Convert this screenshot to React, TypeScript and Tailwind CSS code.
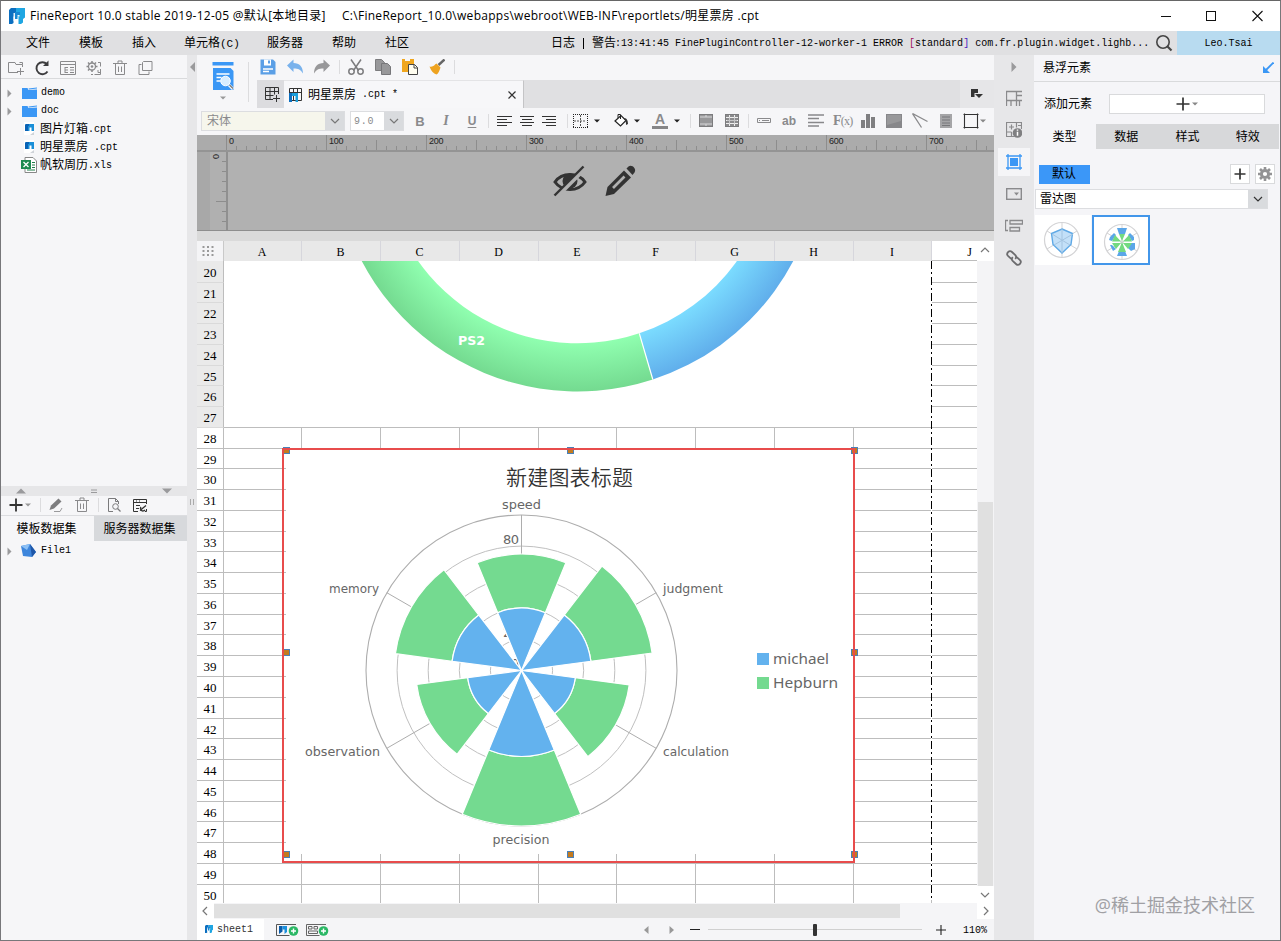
import type { ReactNode } from 'react';

const SONG = "font-['Liberation_Mono','Noto_Sans_CJK_SC',monospace] text-[10px]";
const CJK = "font-['Open_Sans','Noto_Sans_CJK_SC',sans-serif] text-[12px]";

function Icon({ w = 16, h = 16, className = '', children }: { w?: number; h?: number; className?: string; children: ReactNode }) {
  return (
    <svg width={w} height={h} viewBox={`0 0 ${w} ${h}`} fill="none" className={`shrink-0 ${className}`}>
      {children}
    </svg>
  );
}

function Caret({ className = '', color = '#222' }: { className?: string; color?: string }) {
  return (
    <Icon w={6} h={4} className={className}>
      <path d="M0 0.5h6L3 3.5z" fill={color} />
    </Icon>
  );
}

function Chevron({ color = '#777' }: { color?: string }) {
  return (
    <Icon w={10} h={6}>
      <path d="M1 1l4 4 4-4" stroke={color} strokeWidth="1.2" />
    </Icon>
  );
}

function Sep({ className = '' }: { className?: string }) {
  return <div className={`w-px shrink-0 bg-[#dcdcde] ${className}`} />;
}

function Logo({ s = 16 }: { s?: number }) {
  return (
    <svg width={s} height={s} viewBox="0 0 16 16" className="shrink-0">
      <path d="M2 0h14v9.500l-2 1.500v3.500l-2 1.500H9.500V8.500H7V0z" fill="#1fa6e2" />
      <path d="M0 2l2-2h5v8.500H4.500V15l-1.500 1H0z" fill="#0c6fc0" />
      <path d="M4.500 5h6v3.500H7.500V12l-1 1h-2z" fill="#fff" opacity="0.9" />
      <path d="M6 4h5v3H8.500v4H6z" fill="#1788d4" />
    </svg>
  );
}

function TitleBar() {
  return (
    <div className="flex h-[31px] shrink-0 items-center bg-white pl-2 pt-px text-black">
      <Logo s={16} />
      <div className="ml-[5px] w-[312px] whitespace-pre font-['Open_Sans','Noto_Sans_CJK_SC',sans-serif] text-[12px] tracking-[0.26px]">
        FineReport 10.0 stable 2019-12-05 @默认[本地目录]
      </div>
      <div className="flex-1 whitespace-pre font-['Open_Sans','Noto_Sans_CJK_SC',sans-serif] text-[12px] tracking-[0.28px]">
        C:\FineReport_10.0\webapps\webroot\WEB-INF\reportlets/明星票房 .cpt
      </div>
      <Icon w={10} h={12} className="mr-[35px]"><path d="M0 6.500h10" stroke="#111" /></Icon>
      <Icon w={11} h={12} className="mr-[35px]"><rect x="0.500" y="1.500" width="9" height="9" stroke="#111" /></Icon>
      <Icon w={11} h={12} className="mr-[17px]"><path d="M0.500 1l10 10M10.500 1l-10 10" stroke="#111" strokeWidth="1.100" /></Icon>
    </div>
  );
}

function MenuBar() {
  return (
    <div className={`flex h-6 shrink-0 items-center bg-[#e0e0e2] text-black ${CJK}`}>
      <span className="ml-[25px] w-[53px]">文件</span>
      <span className="w-[53px]">模板</span>
      <span className="w-[52px]">插入</span>
      <span className="w-[83px]">单元格<span className="font-['Liberation_Mono',monospace] text-[11px]">(C)</span></span>
      <span className="w-[65px]">服务器</span>
      <span className="w-[53px]">帮助</span>
      <span className="w-[166px]">社区</span>
      <span>日志</span>
      <span className="mx-[8px] h-[11px] w-px bg-black" />
      <span>警告</span>
      <span className={`-ml-px flex-1 whitespace-pre ${SONG}`}>
        :13:41:45 FinePluginController-12-worker-1 ERROR <span className="text-[#a01060]">[</span>standard<span className="text-[#4a20c0]">]</span> com.fr.plugin.widget.lighb...
      </span>
      <Icon w={18} h={18} className="mr-1">
        <circle cx="8" cy="8" r="6.200" stroke="#444" strokeWidth="1.600" />
        <path d="M12.500 12.500l4 4" stroke="#444" strokeWidth="2.200" />
      </Icon>
      <div className={`flex h-6 w-[103px] items-center justify-center bg-[#b8dbf0] ${SONG}`}>Leo.Tsai</div>
    </div>
  );
}

function Folder() {
  return (
    <Icon w={15} h={13}>
      <path d="M0 1h5.500l1 2L15 2.500V12H0z" fill="#3b97f5" />
      <path d="M6.500 1.500L15 0.500v1l-8 1z" fill="#3b97f5" />
    </Icon>
  );
}

function CptFile() {
  return (
    <Icon w={15} h={14}>
      <rect x="2" y="0" width="10" height="13" fill="#fff" />
      <path d="M4 2h8v7H9.500V5.500h-2V9H3V3z" fill="#1a8fd8" />
      <path d="M3 3l1-1h3v2H6v5H3z" fill="#0a62b5" />
      <path d="M8 13l4-3v3z" fill="#cfd3d8" />
    </Icon>
  );
}

function XlsFile() {
  return (
    <Icon w={16} h={16}>
      <path d="M4 0.500h8l3.500 3.500v11.500H4z" fill="#fff" stroke="#888" />
      <path d="M11 5.500h3M11 8h3M11 10.500h3M6 13h8" stroke="#1e7d49" />
      <rect x="0" y="3" width="10" height="9" fill="#1e8a50" />
      <path d="M2.500 5l5 5M7.500 5l-5 5" stroke="#fff" strokeWidth="1.300" />
    </Icon>
  );
}

function TreeRow({ arrow, icon, name, ext }: { arrow?: boolean; icon: ReactNode; name?: string; ext?: string }) {
  return (
    <div className="flex h-[18px] items-center whitespace-pre pl-[6px] text-black">
      <Icon w={5} h={9} className={arrow ? '' : 'invisible'}><path d="M0.500 0.500v8l4-4z" fill="#9a9a9c" /></Icon>
      <span className="ml-[9px] mr-[3px] flex w-4 justify-center">{icon}</span>
      {name && <span className={CJK}>{name}</span>}
      <span className={name ? SONG : `ml-px -mt-px ${SONG}`}>{ext}</span>
    </div>
  );
}

function LeftPanel() {
  return (
    <div className="flex w-[186px] shrink-0 flex-col bg-[#f6f6f8]">
      <div className="flex h-[24px] shrink-0 items-center gap-[10px] border-b border-[#d9dadc] pl-[7px] pt-[2px]">
        <Icon>
          <path d="M14.500 7V4.500H8L7 2.500H0.500v10H10M11.500 2.500h3v2M12.500 8v7M9 11.500h7" stroke="#8a8a8c" />
        </Icon>
        <Icon>
          <path d="M13.500 11.500A6 6 0 1 1 12.800 4" stroke="#3c3c3e" strokeWidth="1.900" />
          <path d="M14.500 0.500v5.500H9z" fill="#3c3c3e" />
        </Icon>
        <Icon>
          <path d="M0.500 1.500h15v13H0.500zM0.500 4.500h15M5 7v6M5 7.500h3M5 10h3M5 12.500h3M10 7.500h4M10 10h4M10 12.500h4" stroke="#8a8a8c" />
        </Icon>
        <Icon>
          <circle cx="6" cy="6.500" r="3.500" stroke="#8a8a8c" strokeWidth="1.300" />
          <circle cx="6" cy="6.500" r="1.300" fill="#8a8a8c" />
          <path d="M6 1v2M6 10v2M0.500 6.500h2M9.500 6.500h2M2 2.500l1.500 1.500M10 2.500L8.500 4M2 10.500L3.500 9" stroke="#8a8a8c" strokeWidth="1.500" />
          <path d="M12 2.500h2.500v4M14.500 9v5.500h-6M5 14.500h2M12 10v2.500h2" stroke="#8a8a8c" />
        </Icon>
        <Icon>
          <path d="M1 3.500h14M6 3V1h4v2M3.500 4v10.500h9V4M6.500 6.500v5.500M9.500 6.500v5.500" stroke="#8a8a8c" />
        </Icon>
        <Icon>
          <path d="M5.500 1.500h8.500v9H4.500v-8zM3.500 4.500h-2.500v10h10v-3" stroke="#8a8a8c" />
        </Icon>
      </div>
      <div className="flex-1 pt-[5px]">
        <TreeRow arrow icon={<Folder />} ext="demo" />
        <TreeRow arrow icon={<Folder />} ext="doc" />
        <TreeRow icon={<CptFile />} name="图片灯箱" ext=".cpt" />
        <TreeRow icon={<CptFile />} name="明星票房" ext=" .cpt" />
        <TreeRow icon={<XlsFile />} name="帆软周历" ext=".xls" />
      </div>
      <div className="flex h-[10px] shrink-0 items-center bg-[#e6e6e8] pl-[15px]">
        <Icon w={10} h={6}><path d="M0 5.500h10L5 0.500z" fill="#9a9a9c" /></Icon>
        <Icon w={6} h={5} className="ml-[65px]"><path d="M0 1h6M0 3.500h6" stroke="#9a9a9c" /></Icon>
        <Icon w={10} h={6} className="ml-[65px]"><path d="M0 0.500h10L5 5.500z" fill="#9a9a9c" /></Icon>
      </div>
      <div className="flex h-[20px] shrink-0 items-center border-b border-[#dcdde0] pb-px pl-2">
        <Icon w={14} h={14}><path d="M7 0.500v13M0.500 7h13" stroke="#333" strokeWidth="1.800" /></Icon>
        <Caret color="#999" className="ml-[2px]" />
        <Sep className="ml-[9px] h-[14px]" />
        <Icon className="ml-[7px]">
          <path d="M1.500 13l1.500-4.500 7.500-7 3 3-7.500 7z" fill="#7d7d7f" />
          <path d="M6 14.500h6l2-3.500" stroke="#9a9a9c" />
        </Icon>
        <Icon className="ml-[10px]">
          <path d="M1 3.500h14M6 3V1h4v2M3.500 4v10.500h9V4M6.500 6.500v5.500M9.500 6.500v5.500" stroke="#8a8a8c" />
        </Icon>
        <Sep className="ml-[8px] h-[14px]" />
        <Icon className="ml-[7px]">
          <path d="M7 14.500H2.500v-13h7l3 3V7M9.500 1.500v3h3" stroke="#7a7a7c" />
          <circle cx="9.500" cy="9.500" r="2.800" stroke="#7a7a7c" />
          <path d="M11.500 11.500l3 3" stroke="#7a7a7c" strokeWidth="1.300" />
        </Icon>
        <Icon className="ml-[10px]">
          <path d="M6 14.500H1.500v-12h13V7M1.500 5.500h13M4 8.500h4M4 11.500h3M4 4h1M7 4h1M13 14.500h1.500V12" stroke="#333" />
          <path d="M8 13.500l6-5M9 10a2.500 2.500 0 1 0 4 3" stroke="#333" strokeWidth="1.300" />
        </Icon>
      </div>
      <div className={`flex h-[25px] shrink-0 text-black ${CJK}`}>
        <div className="flex w-[93px] items-center justify-center pr-[2px]">模板数据集</div>
        <div className="flex w-[93px] items-center justify-center bg-[#d7d9dc] pr-[2px]">服务器数据集</div>
      </div>
      <div className="h-[399px] shrink-0 pt-px">
        <TreeRow
          arrow
          ext="File1"
          icon={
            <Icon w={16} h={14}>
              <path d="M0 2l9-2 6 8-4 5-9-1z" fill="#3e86dc" />
              <path d="M9 0l6 8-4 5z" fill="#1f57a8" />
              <path d="M0 2l9-2-3 6z" fill="#8cc0f5" />
            </Icon>
          }
        />
      </div>
    </div>
  );
}

function SplitBar() {
  return (
    <div className="flex w-[10px] shrink-0 flex-col items-center bg-[#e7e7e9] pt-[7px]">
      <Icon w={5} h={10}><path d="M5 0v10L0 5z" fill="#9a9a9c" /></Icon>
      <Icon w={4} h={6} className="mt-[427px]"><path d="M0.500 0v6M3.500 0v6" stroke="#aaa" /></Icon>
    </div>
  );
}

function MainToolbar() {
  return (
    <div className="flex h-[53px] shrink-0 bg-[#f6f6f8]">
      <div className="flex w-[51px] flex-col items-center pt-[7px]">
        <Icon w={22} h={29}>
          <path d="M0.500 0h21v3.500h-21z" fill="#3b97f5" />
          <path d="M1 6h17.500l3 3v19H1z" fill="#3b97f5" />
          <path d="M4.500 12h13M4.500 15.500h5M4.500 19h4" stroke="#fff" strokeWidth="1.500" />
          <circle cx="13.500" cy="19" r="4.800" fill="#d9edff" stroke="#fff" />
          <path d="M17 23l4 4" stroke="#fff" strokeWidth="3" />
          <path d="M17.500 23l3.500 3.500" stroke="#777" strokeWidth="1.300" />
        </Icon>
        <Caret color="#999" className="mt-[5px]" />
      </div>
      <Sep className="mt-[7px] h-[40px]" />
      <div className="ml-[8px] flex flex-1 flex-col">
        <div className="flex h-[25px] items-center pb-px pl-[3px]">
          <Icon>
            <path d="M0.500 0.500h12.500l2.500 2.500v12.500H0.500z" fill="#5b9fe6" />
            <path d="M4 0.500h7v6H4z" fill="#fff" />
            <path d="M8 1.500h2v3H8z" fill="#5b9fe6" />
            <path d="M3 10h10M3 12.500h6" stroke="#fff" strokeWidth="1.400" />
          </Icon>
          <Icon className="ml-[11px]"><path d="M0 6.500L6.500 0.500v3.500c6 0 9.500 4 9.500 10.500-2.500-4-4.500-5-9.500-5V13z" fill="#79b2ec" /></Icon>
          <Icon className="ml-[11px]"><path d="M16 6.500L9.500 0.500v3.500c-6 0-9.500 4-9.500 10.500 2.500-4 4.500-5 9.500-5V13z" fill="#98989a" /></Icon>
          <Sep className="ml-[9px] h-[14px]" />
          <Icon className="ml-[8px]">
            <path d="M3 0.500l7.500 11M13 0.500L5.500 11.500" stroke="#7c7c7e" strokeWidth="1.500" />
            <circle cx="3.500" cy="12.500" r="2.700" stroke="#7c7c7e" strokeWidth="1.500" />
            <circle cx="12.500" cy="12.500" r="2.700" stroke="#7c7c7e" strokeWidth="1.500" />
          </Icon>
          <Icon className="ml-[11px]">
            <path d="M0.500 0.500h6l3 3v8h-9z" fill="#98989a" stroke="#7c7c7e" />
            <path d="M6.500 4.500h6l3 3v8h-9z" fill="#98989a" stroke="#77777a" />
          </Icon>
          <Icon className="ml-[11px]">
            <path d="M0 0h3v2h5V0h4v13H0z" fill="#f0a61e" />
            <path d="M6.500 5.500h6l3 3v7h-9z" fill="#fffdf0" stroke="#444" />
            <path d="M12 5.500v3.500h3.500" stroke="#444" />
          </Icon>
          <Icon className="ml-[11px]">
            <path d="M15.500 0.500L9.500 6" stroke="#666" strokeWidth="2.400" />
            <path d="M0.500 7.500c4 1 5-2 7-3l4 4c-1 3-2 6-4 7-3-1-5-3-7-8z" fill="#eea320" />
          </Icon>
          <Sep className="ml-[9px] h-[14px]" />
        </div>
        <div className="flex h-[28px] bg-[#e0e0e2]">
          <div className="flex w-[27px] items-center justify-end bg-[#dcdcdf] pr-[4px]">
            <Icon w={15} h={15}>
              <path d="M8 12.500H0.500v-12h13V7M0.500 4.500h13M0.500 8.500h8M5 0.500v12M9.500 0.500v7M11.500 8v7M8 11.500h7" stroke="#333" />
            </Icon>
          </div>
          <div className="flex w-[240px] items-center border-t border-r border-[#c4c4c6] border-t-[#e4e4e6] bg-[#f7f7f9] pl-[5px] text-black">
            <Icon w={14} h={14}>
              <path d="M0.500 0.500h12v12h-12zM0.500 4.500h12M4.500 0.500v12M8.500 0.500v12" stroke="#333" />
              <path d="M0 5h3v9H0z" fill="#0c6fc0" />
              <path d="M3 5h6v9H6.500V8H3z" fill="#1b9fdc" />
            </Icon>
            <span className={`ml-[5px] ${CJK}`}>明星票房</span>
            <span className={`flex-1 whitespace-pre ${SONG}`}> .cpt *</span>
            <Icon w={8} h={8} className="mr-[7px]"><path d="M0.500 0.500l7 7M7.500 0.500l-7 7" stroke="#333" strokeWidth="1.200" /></Icon>
          </div>
          <div className="flex-1" />
          <div className="flex w-[34px] items-center justify-center bg-[#e6e6e8]">
            <Icon w={12} h={10}>
              <path d="M0 0h7v4H3.500v4H0z" fill="#333" />
              <path d="M4 5h8L8 9z" fill="#333" />
            </Icon>
          </div>
        </div>
      </div>
    </div>
  );
}

function FormatBar() {
  return (
    <div className="flex h-[27px] shrink-0 items-center bg-[#f6f6f8] pb-px pl-1 text-[#8a8a8c]">
      <div className="flex h-5 w-[144px] border border-[#dcdde0] bg-[#f6f6ec]">
        <div className={`flex flex-1 items-center pl-[5px] ${CJK}`}>宋体</div>
        <div className="flex w-[19px] items-center justify-center bg-[#d9dbde]"><Chevron /></div>
      </div>
      <div className="ml-[5px] flex h-5 w-[54px] border border-[#dcdde0] bg-white">
        <div className={`flex flex-1 items-center whitespace-pre pl-[3px] tracking-[0.8px] ${SONG}`}>9.0</div>
        <div className="flex w-[19px] items-center justify-center bg-[#d9dbde]"><Chevron /></div>
      </div>
      <span className="ml-[10px] w-3 text-center font-['Liberation_Sans',sans-serif] text-[13px] font-bold leading-none">B</span>
      <span className="ml-[14px] w-3 text-center font-['Liberation_Serif',serif] text-[14px] font-bold italic leading-none">I</span>
      <span className="ml-[14px] w-3 text-center font-['Liberation_Sans',sans-serif] text-[12px] font-bold leading-none underline underline-offset-2">U</span>
      <Sep className="ml-[10px] h-[14px]" />
      <Icon className="ml-[7px]"><path d="M1 3.500h15M1 6.500h10M1 9.500h15M1 12.500h10" stroke="#333" /></Icon>
      <Icon className="ml-[7px]"><path d="M1 3.500h14M3 6.500h10M1 9.500h14M3 12.500h10" stroke="#333" /></Icon>
      <Icon className="ml-[6px]"><path d="M1 3.500h14M5 6.500h10M1 9.500h14M5 12.500h10" stroke="#333" /></Icon>
      <Sep className="ml-[10px] h-[14px]" />
      <Icon className="ml-1">
        <path d="M1 1.500h15M1 14.500h15M1.500 1v14M15.500 1v14" stroke="#222" strokeDasharray="1 1" />
        <path d="M2 8h12M8.500 2v12" stroke="#555" strokeDasharray="2 1" />
      </Icon>
      <Caret className="ml-[6px]" />
      <Icon className="ml-[13px]">
        <path d="M2 8l6-5.500 5 5-5.500 5.500z" stroke="#222" strokeWidth="1.200" fill="#fff" />
        <path d="M5 5V1.500h2.500V6" stroke="#222" />
        <path d="M11 5c3 0 4 3 4 6l-2 1c0-2 0-4-2-7z" fill="#333" />
      </Icon>
      <Caret className="ml-[5px]" />
      <div className="ml-[12px] flex w-4 flex-col items-center font-['Liberation_Sans',sans-serif] text-[14px] font-bold leading-[12px]">
        A
        <span className="mt-px h-[3px] w-4 bg-[#858587]" />
      </div>
      <Caret className="ml-[6px]" />
      <Sep className="ml-[10px] h-[14px]" />
      <Icon className="ml-[7px]">
        <rect x="1.500" y="1.500" width="13" height="12" fill="#98989a" stroke="#7c7c7e" />
        <path d="M2 4h12M2 11h12M8 2v2M8 11v2" stroke="#d8d8da" />
      </Icon>
      <Icon className="ml-[10px]">
        <rect x="1.500" y="1.500" width="13" height="12" fill="#8b8b8d" stroke="#7c7c7e" />
        <path d="M2 4.500h12M2 10.500h12M5.500 2v2.500M5.500 10.500V13M10.500 2v2.500M10.500 10.500V13M2 7.500h1M13 7.500h1" stroke="#eee" />
        <path d="M5.500 4.500v6M10.500 4.500v6M3 7.500h10" stroke="#c4c4c6" />
      </Icon>
      <Sep className="ml-[8px] h-[14px]" />
      <Icon className="ml-[7px]"><path d="M1.500 5.500h13v4h-13zM3 7.500h1M6 7.500h7" stroke="#8a8a8c" /></Icon>
      <span className="ml-[9px] w-4 text-center font-['Liberation_Sans',sans-serif] text-[12px] font-bold leading-none">ab</span>
      <Icon className="ml-[11px]"><path d="M0 2h16M0 5.500h11M0 9.500h16M0 13h11" stroke="#88888a" strokeWidth="1.600" /></Icon>
      <span className="ml-[9px] w-[18px] whitespace-nowrap font-['Liberation_Serif',serif] text-[14px] font-bold leading-none tracking-[-0.8px]">F<span className="text-[12px] font-normal">(x)</span></span>
      <Icon className="ml-[9px]"><path d="M1 7h4v8H1zM6 1h4v14H6zM11 4h4v11h-4z" fill="#7f7f81" /></Icon>
      <Icon className="ml-[10px]">
        <rect x="0.500" y="1.500" width="15" height="13" fill="#98989a" stroke="#87878a" />
        <path d="M1 12l14-4v6H1z" fill="#87878a" />
      </Icon>
      <Icon className="ml-[10px]"><path d="M0.500 0.500l15 8M0.500 0.500l9 14" stroke="#8a8a8c" strokeWidth="1.300" /></Icon>
      <Icon className="ml-[10px]">
        <rect x="2" y="1" width="12" height="14" fill="#a5a5a7" />
        <path d="M4 4h8M4 7h8M4 10h8M4 12.500h8" stroke="#77777a" />
      </Icon>
      <Icon className="ml-[9px]"><path d="M0.500 1.500h15M0.500 14.500h15M1.500 0.500v15M14.500 0.500v15" stroke="#333" strokeWidth="1.100" /></Icon>
      <Caret className="ml-px" color="#888" />
    </div>
  );
}

function Ruler() {
  return (
    <div className="flex h-[96px] shrink-0 flex-col overflow-hidden border-b border-[#8e8e8e] bg-[#b1b1b1]">
      <div className="flex h-[17px] shrink-0 border-b-2 border-[#949494] bg-[#ababab]">
        <div className="w-[29px] shrink-0" />
        {Array.from({ length: 77 }, (_, i) => (
          <div key={i} className="flex w-[10px] shrink-0 items-end">
            <span className={`w-px shrink-0 bg-[#8d8d8d] ${i % 10 === 0 ? 'h-[15px]' : i % 5 === 0 ? 'h-[10px]' : 'h-[4px]'}`} />
            {i % 10 === 0 && (
              <span className="relative -top-[3px] ml-[2px] w-0 font-['Liberation_Sans',sans-serif] text-[9px] leading-[11px] tracking-[-0.2px] text-[#222]">{i * 10}</span>
            )}
          </div>
        ))}
      </div>
      <div className="flex flex-1">
        <div className="w-[13px] bg-[#a8a8a8]" />
        <div className="flex w-[18px] flex-col items-end border-r-2 border-[#909090] bg-[#b0b0b0]">
          <span className="mr-[7px] h-[9px] -rotate-90 font-['Liberation_Sans',sans-serif] text-[9px] leading-[9px] text-[#222]">0</span>
          {[4, 4, 4, 4, 10, 4, 4].map((w, i) => (
            <span key={i} className={`mb-[9px] h-px shrink-0 bg-[#8d8d8d] ${w === 10 ? 'w-[10px]' : 'w-1'}`} />
          ))}
        </div>
        <div className="flex flex-1 items-start gap-[17px] pl-[324px] pt-[12px]">
          <Icon w={36} h={34}>
            <path d="M3 18C10 8 26 8 33 18 26 28 10 28 3 18z" stroke="#333" strokeWidth="3" />
            <circle cx="18" cy="17" r="7.500" fill="#333" />
            <path d="M5 32L34 3" stroke="#b1b1b1" strokeWidth="5" />
            <path d="M2.500 31.500L31.500 2.500" stroke="#333" strokeWidth="2.400" />
          </Icon>
          <Icon w={34} h={34}>
            <path d="M0.500 32l2-9L19 6.500l7 7L9 30z" fill="#333" />
            <path d="M8 24L19.500 12.500" stroke="#b1b1b1" strokeWidth="2.600" />
            <path d="M21.500 4.500l2-2c3-2.500 8.500 2 6 6l-2 2.500z" fill="#333" />
          </Icon>
        </div>
      </div>
    </div>
  );
}

const COLS = [
  { name: 'A', w: 'w-[78px]' },
  { name: 'B', w: 'w-[79px]' },
  { name: 'C', w: 'w-[79px]' },
  { name: 'D', w: 'w-[79px]' },
  { name: 'E', w: 'w-[78px]' },
  { name: 'F', w: 'w-[79px]' },
  { name: 'G', w: 'w-[79px]' },
  { name: 'H', w: 'w-[79px]' },
  { name: 'I', w: 'w-[78px]' },
];

function ColumnHeader() {
  return (
    <div className="flex h-[20px] shrink-0 bg-[#e8e8e8] font-['Liberation_Serif',serif] text-[12px] text-black">
      <div className="flex w-[27px] items-center justify-center border-r border-[#c9c9c9] bg-[#f4f4f6]">
        <Icon w={12} h={10} className="mr-[5px]"><path d="M1.500 0v10M6 0v10M10.500 0v10" stroke="#999" strokeWidth="2" strokeDasharray="2 2" /></Icon>
      </div>
      {COLS.map((c) => (
        <div key={c.name} className={`${c.w} flex items-center justify-center border-r border-[#d6d6dc] pt-[4px] pr-px`}>{c.name}</div>
      ))}
      <div className="flex flex-1 items-center justify-end border-b border-[#bdbdbd] bg-white pr-[5px] pt-[4px]">J</div>
    </div>
  );
}

function RingChart() {
  return (
    <svg width="707" height="166" viewBox="224 261 707 166" className="absolute left-[27px] top-0 bg-white">
      <defs>
        <radialGradient id="ringGreen" gradientUnits="userSpaceOnUse" cx="577.500" cy="147.800" r="243.700">
          <stop offset="0.800" stopColor="#90ffb0" />
          <stop offset="1" stopColor="#74da90" />
        </radialGradient>
        <radialGradient id="ringBlue" gradientUnits="userSpaceOnUse" cx="577.500" cy="147.800" r="243.700">
          <stop offset="0.800" stopColor="#7bdcff" />
          <stop offset="1" stopColor="#60aeeb" />
        </radialGradient>
      </defs>
      <path d="M333.800 147.800A243.700 243.700 0 0 0 652.800 379.500L639.300 333.300A195.500 195.500 0 0 1 382 147.800z" fill="url(#ringGreen)" />
      <path d="M821.200 147.800A243.700 243.700 0 0 1 652.800 379.500L639.300 333.300A195.500 195.500 0 0 0 773 147.800z" fill="url(#ringBlue)" />
      <path d="M652.800 379.500L639.300 333.300" stroke="#fff" strokeWidth="1.200" />
      <text x="458" y="345" textLength="27" lengthAdjust="spacingAndGlyphs" fill="#fff" fontSize="12" fontWeight="bold" fontFamily="DejaVu Sans, sans-serif">PS2</text>
    </svg>
  );
}

const CX = 521.5;
const CY = 670.5;

function wedge(angle: number, r0: number, r1: number) {
  const at = (r: number, a: number) => {
    const t = (a * Math.PI) / 180;
    return `${(CX + r * Math.sin(t)).toFixed(2)} ${(CY - r * Math.cos(t)).toFixed(2)}`;
  };
  const a = angle - 22.4;
  const b = angle + 22.4;
  return `M${at(r0, a)}L${at(r1, a)}A${r1} ${r1} 0 0 1 ${at(r1, b)}L${at(r0, b)}A${r0} ${r0} 0 0 0 ${at(r0, a)}z`;
}

const SKILLS = [
  { angle: 0, michael: 62.5, total: 116.5 },
  { angle: 60, michael: 70, total: 131.8 },
  { angle: 120, michael: 54.3, total: 108.7 },
  { angle: 180, michael: 86, total: 155.5 },
  { angle: 240, michael: 54.3, total: 105.7 },
  { angle: 300, michael: 70, total: 127.2 },
];

const LABELS = [
  { text: 'speed', x: 502, y: 509, w: 39 },
  { text: 'judgment', x: 663, y: 593, w: 60 },
  { text: 'calculation', x: 663, y: 756, w: 66 },
  { text: 'precision', x: 492.5, y: 844, w: 57 },
  { text: 'observation', x: 305, y: 756, w: 75 },
  { text: 'memory', x: 329, y: 593, w: 50 },
];

const HANDLES = [
  [286.5, 450.5], [570.5, 450.5], [854.5, 450.5],
  [286.5, 652.5], [854.5, 652.5],
  [286.5, 854.5], [570.5, 854.5], [854.5, 854.5],
];

function RadarChart() {
  return (
    <svg width="578" height="420" viewBox="281 446 578 420" className="absolute left-[84px] top-[185px]">
      <rect x="286" y="450" width="568" height="404" fill="#fff" />
      {[31.1, 62.2, 93.3, 124.4].map((r) => (
        <circle key={r} cx={CX} cy={CY} r={r} fill="none" stroke="#c0c0c0" />
      ))}
      <circle cx={CX} cy={CY} r="155.500" fill="none" stroke="#adadad" strokeWidth="1.100" />
      <path d="M521.500 515v311M386.800 592.700l269.400 155.600M386.800 748.300l269.400-155.600" stroke="#adadad" />
      <g fill="#666" fontSize="13" fontFamily="DejaVu Sans, sans-serif">
        {[80, 20].map((v) => (
          <text key={v} x="503" y={668 - v * 1.555} textLength="16">{v}</text>
        ))}
        <text x="511" y="668">0</text>
      </g>
      {SKILLS.map((s) => (
        <g key={s.angle} stroke="#fff" strokeWidth="1.200">
          <path d={wedge(s.angle, s.michael, s.total)} fill="#74da90" />
          <path d={wedge(s.angle, 0, s.michael)} fill="#63b2ee" />
        </g>
      ))}
      <text x="506" y="485" textLength="127" fill="#333" fontSize="21" fontWeight="350" fontFamily="Noto Sans CJK SC, sans-serif">新建图表标题</text>
      <g fill="#666" fontSize="13" fontFamily="DejaVu Sans, sans-serif">
        {LABELS.map((l) => (
          <text key={l.text} x={l.x} y={l.y} textLength={l.w} lengthAdjust="spacingAndGlyphs">{l.text}</text>
        ))}
      </g>
      <rect x="757" y="653" width="12" height="12" fill="#63b2ee" />
      <rect x="757" y="677" width="12" height="12" fill="#74da90" />
      <g fill="#666" fontSize="15" fontFamily="Noto Sans, sans-serif">
        <text x="773" y="664" textLength="56" lengthAdjust="spacingAndGlyphs">michael</text>
        <text x="773" y="688" textLength="65" lengthAdjust="spacingAndGlyphs">Hepburn</text>
      </g>
      {HANDLES.map(([x, y]) => (
        <rect key={`${x}-${y}`} x={x - 3} y={y - 3} width="6" height="6" fill="#c47a1e" stroke="#4a80b8" />
      ))}
      <rect x="283" y="449" width="571" height="413" fill="none" stroke="#e84c4c" strokeWidth="2" />
    </svg>
  );
}

// rows are 20.76px high at 110% zoom, so every edge is rounded separately
const rowEdge = (i: number) => (i === 0 ? 0 : Math.round(i * 20.76 + 0.8));

function Sheet() {
  const rows = Array.from({ length: 31 }, (_, i) => ({ n: 20 + i, h: rowEdge(i + 1) - rowEdge(i) }));
  return (
    <div className="relative h-[642px] w-[780px] overflow-hidden bg-white">
      {rows.map((r) => (
        <div key={r.n} className="flex" style={{ height: r.h }}>
          <div
            className={`flex w-[27px] items-center justify-center border-r border-b border-r-[#bdbdbd] pt-px font-['Liberation_Serif',serif] text-[13px] leading-none text-black ${
              r.n < 28 ? 'border-b-[#dadada] bg-[#eaeaea]' : 'border-b-[#bdbdbd] bg-white'
            }`}
          >
            {r.n}
          </div>
          {COLS.map((c) => (
            <div key={c.name} className={`${c.w} border-r border-b border-[#bdbdbd]`} />
          ))}
          <div className="flex-1 border-b border-[#bdbdbd]" />
        </div>
      ))}
      <div className="absolute left-[734px] top-0 h-[639px] w-px bg-[repeating-linear-gradient(to_bottom,#000_0_8px,#fff_8px_11px,#000_11px_13px,#fff_13px_16px)]" />
      <RingChart />
      <RadarChart />
    </div>
  );
}

function Editor() {
  return (
    <div className="flex flex-1 flex-col bg-[#dadada] pt-[10px]">
      <div className="flex h-[662px]">
        <div className="flex w-[780px] flex-col">
          <ColumnHeader />
          <Sheet />
        </div>
        <div className="flex flex-1 flex-col items-center bg-[#f4f4f6]">
          <div className="flex h-[20px] w-full items-center justify-center bg-white pr-px pb-[2px]">
            <Icon w={10} h={6}><path d="M1 5l4-4 4 4" stroke="#777" strokeWidth="1.200" /></Icon>
          </div>
          <div className="mt-[241px] w-[15px] flex-1 bg-[#e0e0e0]" />
          <div className="flex h-[17px] w-full items-center justify-center bg-white pr-px"><Chevron /></div>
        </div>
      </div>
      <div className="flex h-[16px] bg-[#f5f5f7]">
        <div className="flex w-[17px] items-center justify-center bg-white pr-px">
          <Icon w={6} h={10}><path d="M5 1L1 5l4 4" stroke="#777" strokeWidth="1.200" /></Icon>
        </div>
        <div className="my-px w-[686px] bg-[#e0e0e0]" />
        <div className="flex-1" />
        <div className="flex w-[17px] items-center justify-center bg-white">
          <Icon w={6} h={10}><path d="M1 1l4 4-4 4" stroke="#777" strokeWidth="1.200" /></Icon>
        </div>
      </div>
      <div className="flex h-[21px] items-center bg-[#f5f5f7] text-black">
        <div className="flex h-full w-[67px] items-center bg-white pb-[2px] pl-2">
          <Logo s={8} />
          <span className={`ml-1 pt-px text-[#333] ${SONG}`}>sheet1</span>
        </div>
        <Icon w={24} h={14} className="ml-[12px]">
          <path d="M20 1.500H0.500v11h13" stroke="#555" />
          <path d="M3 3h3.500v5.500L3 11z" fill="#0a5ba8" />
          <path d="M6.500 3H11v6l-2.500 2V6.500h-2z" fill="#1b8fdc" />
          <circle cx="17.500" cy="8" r="4.800" fill="#2ab764" />
          <path d="M17.500 5.500v5M15 8h5" stroke="#fff" strokeWidth="1.400" />
        </Icon>
        <Icon w={24} h={14} className="ml-[6px]">
          <path d="M20 1.500H0.500v11h13M2.500 3.500h3.500v2.500H2.500zM8 3.500h3.500v2.500H8zM2.500 8h9v2.500h-9z" stroke="#666" />
          <circle cx="17.500" cy="8" r="4.800" fill="#2ab764" />
          <path d="M17.500 5.500v5M15 8h5" stroke="#fff" strokeWidth="1.400" />
        </Icon>
        <Icon w={5} h={8} className="ml-[314px]"><path d="M4.500 0v8L0 4z" fill="#999" /></Icon>
        <Icon w={5} h={8} className="ml-[20px]"><path d="M0.500 0v8L5 4z" fill="#999" /></Icon>
        <span className="ml-[16px] h-px w-[10px] bg-[#222]" />
        <div className="ml-2 flex h-3 w-[214px] items-center">
          <span className="h-px w-[105px] bg-[#d0d0d0]" />
          <span className="h-3 w-1 rounded-[1px] bg-[#333]" />
          <span className="h-px flex-1 bg-[#d0d0d0]" />
        </div>
        <Icon w={10} h={10} className="ml-[14px]"><path d="M5 0v10M0 5h10" stroke="#222" strokeWidth="1.100" /></Icon>
        <span className={`ml-[17px] pt-px ${SONG}`}>110%</span>
      </div>
    </div>
  );
}

function SideStrip() {
  return (
    <div className="flex w-10 shrink-0 flex-col items-center bg-[#e7e7e9]">
      <div className="flex h-[27px] items-center pb-[3px]"><Icon w={6} h={10}><path d="M0.500 0v10l5-5z" fill="#9a9a9c" /></Icon></div>
      <div className="flex h-8 items-center">
        <Icon><path d="M16 1.500H0.500V16M0.500 10.500h10v-9M10.500 5.500H16M10.500 10.500H16M5 11v5M10.500 11v5M13.500 11v5" stroke="#8a8a8c" strokeWidth="1.300" /></Icon>
      </div>
      <div className="flex h-8 items-center">
        <Icon>
          <path d="M8 14.500H0.500v-14h15V7M3 5h5M5.500 2.500v5M10.500 0.500v5M0.500 10h5M5.500 10v4M12 3.500h3" stroke="#8a8a8c" strokeWidth="1.200" />
          <circle cx="11.500" cy="11" r="4.800" fill="#7f7f81" />
          <path d="M11.500 9.800v4M11.500 7.500v1.300" stroke="#fff" strokeWidth="1.500" />
        </Icon>
      </div>
      <div className="flex h-8 items-center">
        <div className="flex h-7 w-8 items-center justify-center bg-[#f5f5f7]">
          <Icon>
            <path d="M0 2h16M0 14h16M2 0v16M14 0v16" stroke="#3b97f5" strokeWidth="1.300" />
            <rect x="4.500" y="4.500" width="7" height="7" fill="#3b97f5" stroke="#3b97f5" />
          </Icon>
        </div>
      </div>
      <div className="flex h-8 items-center">
        <Icon>
          <rect x="0.700" y="2.700" width="14.600" height="10.600" stroke="#8a8a8c" strokeWidth="1.400" />
          <path d="M8 6.500h5l-2.500 3z" fill="#8a8a8c" />
        </Icon>
      </div>
      <div className="flex h-8 items-center">
        <Icon w={18}><path d="M5 2.500h12.500v3.500H5zM5 9.500h9.500V13H5zM3 2.500H0.500v10H3" stroke="#8a8a8c" strokeWidth="1.300" /></Icon>
      </div>
      <div className="flex h-8 items-center">
        <Icon>
          <g transform="rotate(42 8 8)" stroke="#6c6c6e" strokeWidth="1.800">
            <path d="M6.500 10.500H2.500a2.800 2.800 0 0 1 0-5.600h4.500a2.800 2.800 0 0 1 2.500 3" />
            <path d="M9.500 5.500h4a2.800 2.800 0 0 1 0 5.600H9a2.800 2.800 0 0 1-2.500-3" />
          </g>
        </Icon>
      </div>
    </div>
  );
}

function RightPanel() {
  return (
    <div className={`flex flex-1 flex-col bg-[#f5f5f8] text-black ${CJK}`}>
      <div className="flex h-[27px] items-center justify-between border-b border-[#d9dadc] pl-[9px] pr-[6px]">
        悬浮元素
        <Icon w={12} h={12}><path d="M11.500 0.500L4 8" stroke="#3b97f5" strokeWidth="1.800" /><path d="M1 4v7h7z" fill="#3b97f5" /></Icon>
      </div>
      <div className="flex h-[42px] items-center pl-[10px] pt-[2px]">
        添加元素
        <div className="ml-[17px] flex h-5 w-[156px] items-center justify-center border border-[#d9dadc] bg-white">
          <Icon w={14} h={14}><path d="M7 0.500v13M0.500 7h13" stroke="#333" strokeWidth="1.700" /></Icon>
          <Caret color="#888" className="ml-[2px]" />
        </div>
      </div>
      <div className="flex h-[25px] pl-px">
        <div className="flex w-[61px] items-center justify-center pr-[2px]">类型</div>
        <div className="flex w-[183px] bg-[#d7d8da] pr-px">
          <div className="flex flex-1 items-center justify-center pr-px">数据</div>
          <div className="flex flex-1 items-center justify-center">样式</div>
          <div className="flex flex-1 items-center justify-center">特效</div>
        </div>
      </div>
      <div className="mt-[15px] flex h-5 items-center pl-[5px] pr-[5px]">
        <div className="flex h-[19px] w-[51px] items-center justify-center bg-[#3b97f8] pr-px">默认</div>
        <div className="flex-1" />
        <div className="flex h-5 w-5 items-center justify-center border border-[#d9dadc] bg-white">
          <Icon w={12} h={12}><path d="M6 0.500v11M0.500 6h11" stroke="#333" strokeWidth="1.700" /></Icon>
        </div>
        <div className="ml-[5px] flex h-5 w-5 items-center justify-center border border-[#d9dadc] bg-white">
          <Icon w={14} h={14}>
            <circle cx="7" cy="7" r="3.600" stroke="#939395" strokeWidth="3" />
            <path d="M7 0v2.500M7 11.500V14M0 7h2.500M11.500 7H14M2 2l2 2M10 10l2 2M12 2l-2 2M4 10l-2 2" stroke="#939395" strokeWidth="2.600" />
          </Icon>
        </div>
      </div>
      <div className="ml-px mt-[5px] flex h-5 w-[233px] border border-[#dcdde0] bg-white">
        <div className="flex flex-1 items-center pl-[4px]">雷达图</div>
        <div className="flex w-[19px] items-center justify-center bg-[#d9dbde]"><Chevron color="#333" /></div>
      </div>
      <div className="ml-px mt-[6px] flex h-[50px]">
        <div className="flex w-[56px] items-center justify-center bg-white pr-[2px]">
          <Icon w={38} h={38}>
            <circle cx="19" cy="19" r="17.500" stroke="#d3d3d5" strokeWidth="1.200" />
            <path d="M19 1.500v35M4 10l30 18M34 10L4 28" stroke="#d3d3d5" />
            <path d="M19 8l10.500 4.500-1.500 11-9 8.500-9-8.500-1.500-11z" fill="#c3e0f8" stroke="#5fa9e6" strokeWidth="1.400" />
            <path d="M19 8v24M9 13l18 11M30 13L11 24" stroke="#a4c4e0" />
          </Icon>
        </div>
        <div className="ml-px flex w-[58px] items-center justify-center border-2 border-[#4296ea] bg-white pl-[2px] pt-[3px]">
          <Icon w={38} h={38}>
            <circle cx="19" cy="19" r="17.500" stroke="#d3d3d5" strokeWidth="1.200" />
            <path d="M19 1.500v35M4 10l30 18M34 10L4 28" stroke="#d3d3d5" />
            <path d="M14 5h10l-2 6h-6zM7 14l4-4 2 2-4 6-3-1zM31 14l-4-4-2 2 4 6 2-1zM7 22h2l4 4-3 2zM32 20v6l-4 2-4-4 2-4zM14 33h10l-2-5h-6z" fill="#5aa6e8" />
            <path d="M16 11h6l-3 7zM12 12l6 6.500-9 0zM26 12l-6 6.500 9 0zM9 20h9l-5 6zM29 20h-9l5 6zM15 29h8l-4-10z" fill="#73da80" />
          </Icon>
        </div>
      </div>
      <div className="flex-1" />
      <div className="mb-[21px] mr-[25px] text-right text-[18px] leading-[27px] text-[#a0a0a4]">@稀土掘金技术社区</div>
    </div>
  );
}

export default function App() {
  return (
    <div className="flex h-[941px] w-[1281px] flex-col overflow-hidden border border-t-[#666] border-r-[#77777a] border-b-[#77777a] border-l-[#77777a] bg-white leading-[1.3]">
      <div className="-mt-px" />
      <TitleBar />
      <MenuBar />
      <div className="flex h-[885px]">
        <LeftPanel />
        <SplitBar />
        <div className="flex w-[797px] shrink-0 flex-col">
          <MainToolbar />
          <FormatBar />
          <Ruler />
          <Editor />
        </div>
        <SideStrip />
        <RightPanel />
      </div>
    </div>
  );
}
